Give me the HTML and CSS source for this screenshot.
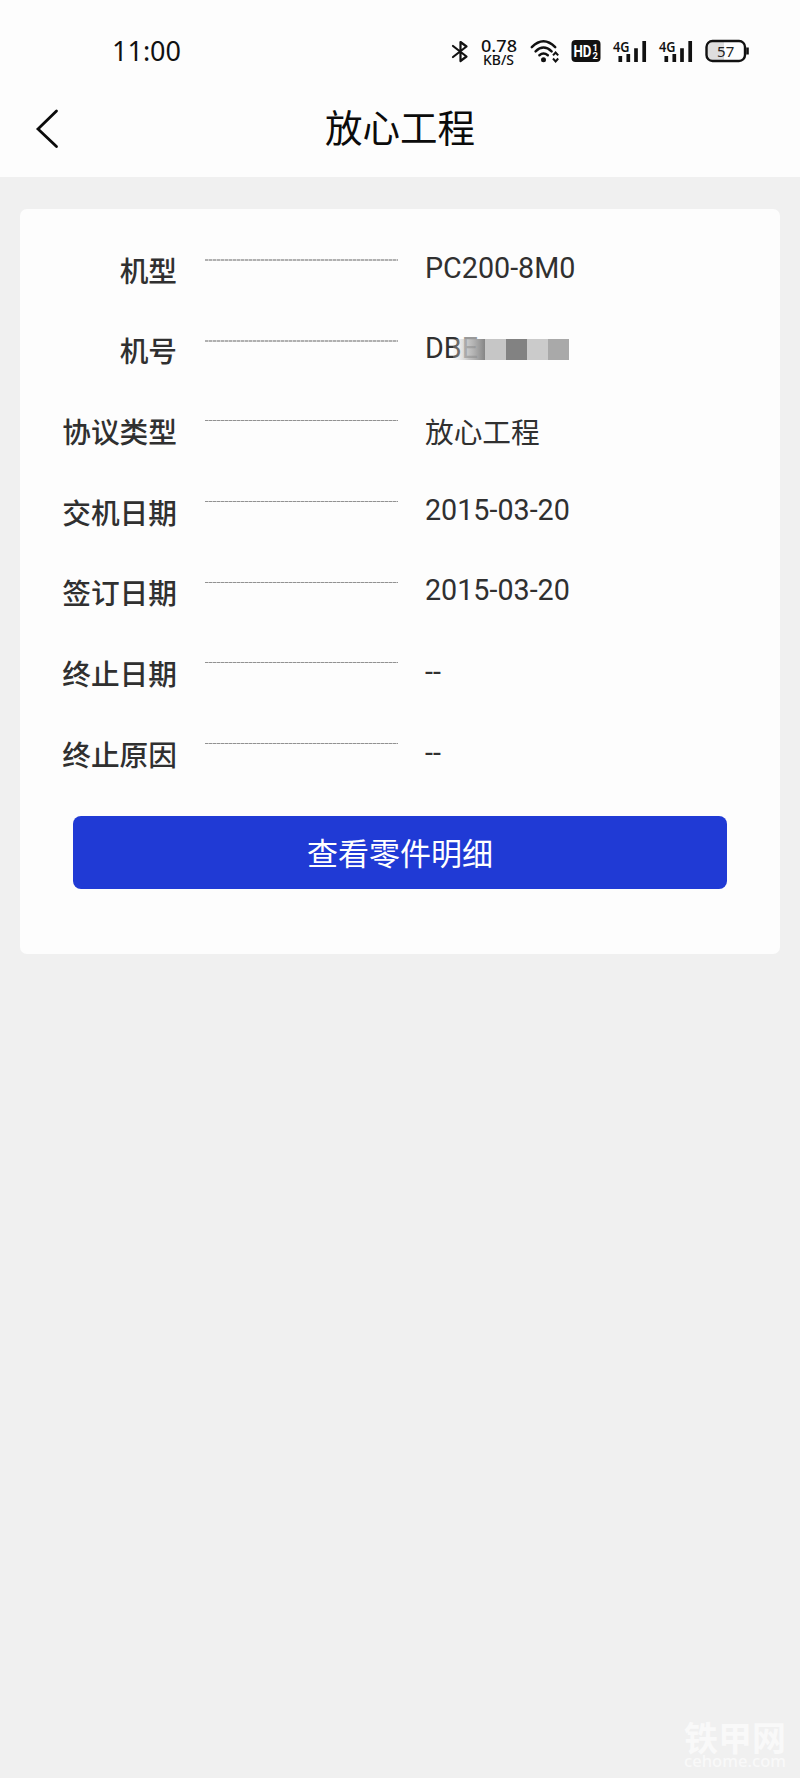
FILE: index.html
```html
<!DOCTYPE html>
<html lang="zh-CN">
<head>
<meta charset="utf-8">
<title>放心工程</title>
<link rel="stylesheet" href="styles.css">
</head>
<body>
<header class="top">
  <div class="status">
    <span class="time">11:00</span>
    <div class="status-icons">
      <svg class="bt" width="18" height="24" viewBox="0 0 18 24"><path d="M2 7 15.500 17.500 9.500 22V3L15.500 7.500 2 18" fill="none" stroke="#111" stroke-width="2.2" stroke-linejoin="round" stroke-linecap="round"/></svg>
      <svg class="speed" width="38" height="34" viewBox="0 0 38 34"><text x="1" y="17.500" font-size="17" textLength="36" lengthAdjust="spacingAndGlyphs">0.78</text><text x="3" y="31" font-size="13.500" textLength="31" lengthAdjust="spacingAndGlyphs">KB/S</text></svg>
      <svg class="wifi" width="30" height="24" viewBox="0 0 30 24"><g fill="none" stroke="#111" stroke-width="2.5" stroke-linecap="round"><path d="M1.8 8.2Q13.5-3.6 25.2 8.2M5.6 12.3Q13.5 4.8 21.6 12.3M9.4 16.2Q13.5 12.8 17.8 16.2"/></g><circle cx="13.5" cy="20.8" r="2.5" fill="#111"/><path d="m23 16.4 2.6-2.9 2.6 2.9M23 19.5l2.6 2.9 2.6-2.9" fill="none" stroke="#111" stroke-width="2"/></svg>
      <svg class="hd" width="30" height="24" viewBox="0 0 30 24"><rect x=".5" y="1" width="29" height="22" rx="4" fill="#111"/><g class="badge-text"><text x="2.500" y="18" font-size="17" textLength="18" lengthAdjust="spacingAndGlyphs">HD</text><text x="21.500" y="11.5" font-size="9.500">1</text><text x="21.500" y="20" font-size="9.500">2</text></g></svg>
      <svg class="sig1" width="34" height="24" viewBox="0 0 34 24"><text class="net-text" x="0" y="12.500" textLength="16.500" lengthAdjust="spacingAndGlyphs">4G</text><path d="M7.3 23v-6M15.3 23v-8M23 23V9.2M31.200 23V2" fill="none" stroke="#111" stroke-width="3.7"/></svg>
      <svg class="sig2" width="34" height="24" viewBox="0 0 34 24"><text class="net-text" x="0" y="12.500" textLength="16.500" lengthAdjust="spacingAndGlyphs">4G</text><path d="M7.3 23v-6M15.3 23v-8M23 23V9.2M31.200 23V2" fill="none" stroke="#111" stroke-width="3.7"/></svg>
      <svg class="battery" width="45" height="24" viewBox="0 0 45 24"><rect x="1.5" y="2" width="38.5" height="20" rx="6" fill="#fdfdfd"/><path d="M19 2H7.5a6 6 0 0 0-6 6v8a6 6 0 0 0 6 6H19z" fill="#dedede"/><rect x="1.5" y="2" width="38.5" height="20" rx="6" fill="none" stroke="#111" stroke-width="2.4"/><path d="M42.5 8.5v7" stroke="#111" stroke-width="2.6"/><text class="battery-text" x="20.7" y="17.5" text-anchor="middle">57</text></svg>
    </div>
  </div>
  <nav class="nav">
    <svg class="back" width="26" height="42" viewBox="0 0 26 42"><path d="M22.5 3 4 21l18.500 17.500" fill="none" stroke="#0b0b0b" stroke-width="2.8" stroke-linecap="round"/></svg>
    <h1 class="title">放心工程</h1>
  </nav>
</header>
<main class="card">
  <dl class="rows">
    <div class="row"><dt class="label">机型</dt><dd class="rule rule-heavy"></dd><dd class="value">PC200-8M0</dd></div>
    <div class="row"><dt class="label">机号</dt><dd class="rule rule-heavy"></dd><dd class="value masked">DB<span class="faded">E</span><svg class="mask" width="116" height="21" viewBox="-4 0 116 21"><defs><linearGradient id="fade"><stop offset="0" stop-color="#e8e8e8" stop-opacity=".2"/><stop offset=".5" stop-color="#a8a8a8" stop-opacity=".7"/><stop offset="1" stop-color="#858585"/></linearGradient></defs><path fill="url(#fade)" d="M-4 0h32v21H-4z"/><path fill="#c6c6c6" d="M28 0h21v21H28z"/><path fill="#828282" d="M49 0h21v21H49z"/><path fill="#cbcbcb" d="M70 0h21v21H70z"/><path fill="#a9a9a9" d="M91 0h21v21H91z"/></svg></dd></div>
    <div class="row"><dt class="label">协议类型</dt><dd class="rule"></dd><dd class="value cjk">放心工程</dd></div>
    <div class="row"><dt class="label">交机日期</dt><dd class="rule"></dd><dd class="value">2015-03-20</dd></div>
    <div class="row"><dt class="label">签订日期</dt><dd class="rule"></dd><dd class="value">2015-03-20</dd></div>
    <div class="row"><dt class="label">终止日期</dt><dd class="rule"></dd><dd class="value empty">--</dd></div>
    <div class="row"><dt class="label">终止原因</dt><dd class="rule"></dd><dd class="value empty">--</dd></div>
  </dl>
  <button class="action" type="button">查看零件明细</button>
</main>
<div class="watermark"><span class="wm-name">铁甲网</span><span class="wm-site">cehome.com</span></div>
</body>
</html>
```
FILE: styles.css
```css
* { box-sizing: border-box; }
body {
  margin: 0;
  min-height: 1778px;
  background: #f0f0f0;
  color: #303030;
  font-family: Roboto, "Noto Sans CJK SC", sans-serif;
  display: flex;
  flex-direction: column;
}
.top { height: 177px; background: #fdfdfd; }
.status {
  display: flex;
  justify-content: space-between;
  align-items: center;
  height: 76px;
  padding: 25px 50px 0 112px;
}
.time { font: 27px/28px "Noto Sans", sans-serif; color: #111; }
.status-icons { display: flex; align-items: center; }
.status-icons svg { display: block; flex: none; overflow: visible; }
.status-icons .speed {
  margin: 0 12px 0 11px;
  fill: #111;
  font-family: "Noto Sans", sans-serif;
  font-weight: 500;
}
.hd { margin-left: 11px; }
.sig1 { margin-left: 12px; }
.sig2 { margin-left: 12px; }
.battery { margin-left: 12px; }
.badge-text { fill: #fff; font-family: Roboto, sans-serif; font-weight: 700; }
.net-text { font: 600 15px "Noto Sans", sans-serif; fill: #111; }
.battery-text { font: 15px "Noto Sans", sans-serif; fill: #222; }
.nav {
  display: grid;
  grid-template-columns: 60px 1fr 60px;
  align-items: center;
  height: 101px;
}
.back { margin: 4px 0 0 34px; }
.title {
  margin: 0 0 1px;
  text-align: center;
  font: 400 37.500px/50px "Noto Sans CJK SC", sans-serif;
  color: #0b0b0b;
}
.card {
  height: 745px;
  margin: 32px 20px 0;
  padding-top: 21px;
  border-radius: 7px;
  background: #fdfdfd;
}
.rows { margin: 0; }
.row {
  display: grid;
  grid-template-columns: 157px 193px 1fr;
  column-gap: 28px;
  height: 80.700px;
}
.label {
  padding-top: 19.500px;
  text-align: right;
  white-space: nowrap;
  font: 500 28.700px/40px "Noto Sans CJK SC", sans-serif;
}
.rule {
  height: 1px;
  margin: 29px 0 0;
  background: repeating-linear-gradient(90deg, #929292 0 3px, #c4c4c4 3px 4px);
}
.rule-heavy {
  height: 2px;
  background: repeating-linear-gradient(90deg, #b0b0b0 0 3px, #d8d8d8 3px 4px);
}
.value { margin: 17.500px 0 0 -1px; font-size: 28.700px; line-height: 40px; }
.empty { margin-top: 18.500px; }
.cjk { margin-top: 19.500px; font-family: "Noto Sans CJK SC", sans-serif; }
.masked { position: relative; margin-top: 17px; }
.faded { color: #999; }
.mask { position: absolute; left: 28px; top: 11px; }
.action {
  display: block;
  width: 654px;
  height: 73px;
  margin: 21.500px auto 0;
  padding: 0 0 2px;
  border: 0;
  border-radius: 8px;
  background: #203ad5;
  color: #fff;
  font: 400 31px/71px "Noto Sans CJK SC", sans-serif;
}
.watermark {
  display: flex;
  flex-direction: column;
  align-items: center;
  align-self: flex-end;
  margin: auto 14px 10px 0;
  color: #f9f9f9;
}
.wm-name { font: 700 34px/34px "Noto Sans CJK SC", sans-serif; }
.wm-site { font: 500 16.600px/14px "Noto Sans", sans-serif; }
```
